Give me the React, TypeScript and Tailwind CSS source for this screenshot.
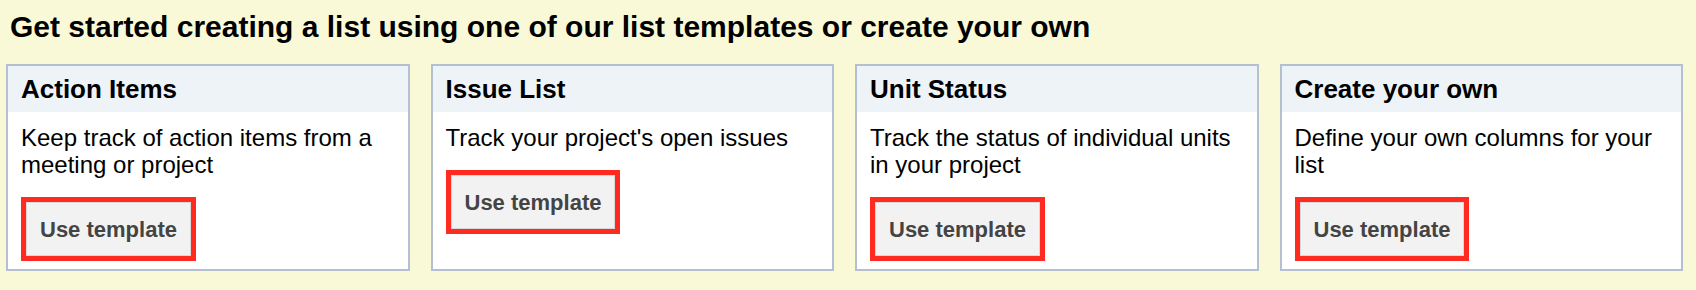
const templates = [
  { title: 'Action Items', description: 'Keep track of action items from a meeting or project' },
  { title: 'Issue List', description: "Track your project's open issues" },
  { title: 'Unit Status', description: 'Track the status of individual units in your project' },
  { title: 'Create your own', description: 'Define your own columns for your list' },
]

function TemplateCard({ title, description }: { title: string; description: string }) {
  return (
    <div className="flex flex-col border-2 border-[#b4c0d0] bg-white">
      <div className="h-[46px] bg-[#eef3f8] px-[13px] pt-[8px] text-[26px] font-bold leading-[30px] text-black">
        {title}
      </div>
      <div className="flex flex-col items-start px-[13px] pt-[12px] pb-[8px]">
        <p className="text-[24px] leading-[27px] text-black">{description}</p>
        <div className="mt-[19px] border-[5px] border-[#ff2a20]">
          <button className="h-[54px] border border-[#d8d8d8] bg-[#f2f2f2] px-[13px] text-[22px] font-bold text-[#444]">
            Use template
          </button>
        </div>
      </div>
    </div>
  )
}

export default function App() {
  return (
    <div className="h-[290px] w-[1696px] bg-[#f9f9d7] pl-[6px] pt-[12px] font-['Liberation_Sans',Arial,sans-serif]">
      <h1 className="pl-[4px] text-[30px] font-bold leading-[30px] text-black">
        Get started creating a list using one of our list templates or create your own
      </h1>
      <div className="mt-[22px] grid w-[1677px] grid-cols-4 gap-[21px]">
        {templates.map((t) => (
          <TemplateCard key={t.title} title={t.title} description={t.description} />
        ))}
      </div>
    </div>
  )
}
